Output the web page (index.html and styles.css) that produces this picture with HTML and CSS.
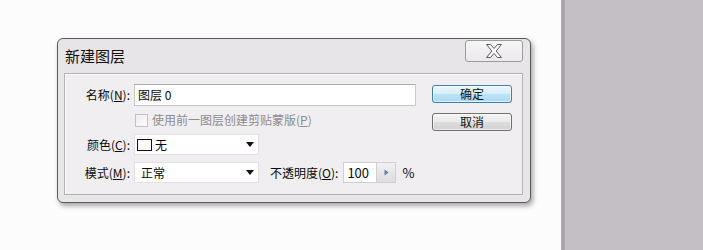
FILE: index.html
```html
<!DOCTYPE html>
<html lang="zh-CN">
<head>
    <meta charset="UTF-8">
    <meta name="viewport" content="width=device-width, initial-scale=1.0">
    <title>新建图层</title>
    <link rel="stylesheet" href="styles.css">
</head>
<body>

    <div class="workspace">
        <div class="dialog">
            <div class="title-bar">
                <span class="title">新建图层</span>
                <button class="close-btn" title="关闭">
                    <svg width="16" height="14" viewBox="0 0 16 14">
                        <path d="M0.5 0.5 H4.6 L8 4.5 L11.4 0.5 H15.5 L10.2 7 L15.5 13.5 H11.4 L8 9.5 L4.6 13.5 H0.5 L5.8 7 Z" fill="#fbfbfb" stroke="#5e5e5e" stroke-width="1"/>
                    </svg>
                </button>
            </div>

            <div class="panel">
                <div class="form">
                    <div class="row">
                        <span class="label">名称(<u>N</u>):</span>
                        <div class="text-box name-box">图层 0</div>
                    </div>

                    <div class="row check-row">
                        <span class="checkbox"></span>
                        <span class="disabled">使用前一图层创建剪贴蒙版(<u>P</u>)</span>
                    </div>

                    <div class="row">
                        <span class="label">颜色(<u>C</u>):</span>
                        <div class="select color-select">
                            <span class="swatch"></span>无
                            <span class="arrow"></span>
                        </div>
                    </div>

                    <div class="row">
                        <span class="label">模式(<u>M</u>):</span>
                        <div class="select mode-select">
                            正常
                            <span class="arrow"></span>
                        </div>
                        <span class="opacity-label">不透明度(<u>O</u>):</span>
                        <div class="spin">
                            <span class="spin-value">100</span>
                            <span class="spin-btn">
                                <svg width="5" height="7" viewBox="0 0 5 7"><path d="M0.5 0.5 L4.5 3.5 L0.5 6.5 Z" fill="#5f7fa6"/></svg>
                            </span>
                        </div>
                        <span class="percent">%</span>
                    </div>
                </div>

                <div class="buttons">
                    <button class="btn btn-default">确定</button>
                    <button class="btn">取消</button>
                </div>
            </div>
        </div>
    </div>

    <div class="side"></div>

</body>
</html>
```

FILE: styles.css
```css
* {
    margin: 0;
    padding: 0;
    box-sizing: border-box;
}

body {
    display: flex;
    height: 250px;
    overflow: hidden;
    background: #fcfcfc;
    font-family: "Noto Sans CJK SC", "Noto Sans", sans-serif;
    font-size: 12px;
    line-height: 16px;
    color: #0a0a0a;
}

u {
    text-decoration: underline;
    text-underline-offset: 1px;
}

.workspace {
    width: 561px;
    padding: 38px 0 0 57px;
}

.side {
    flex: 1;
    background: #c4bfc4;
    border-left: 4px solid #aba6ab;
}

/* dialog frame */
.dialog {
    width: 474px;
    height: 165px;
    display: flex;
    flex-direction: column;
    padding: 0 7px 7px 6px;
    background: #e8e5e8;
    border: 1px solid #5a5a5a;
    border-radius: 6px;
    box-shadow: 2px 3px 5px rgba(0, 0, 0, 0.35);
}

.title-bar {
    height: 34px;
    display: flex;
    justify-content: space-between;
    align-items: flex-start;
}

.title {
    align-self: center;
    padding-left: 1px;
    font-size: 15px;
    line-height: 18px;
    color: #111;
}

.close-btn {
    width: 58px;
    height: 22px;
    margin-top: 1px;
    display: flex;
    align-items: center;
    justify-content: center;
    border: 1px solid #9b9b9b;
    border-radius: 3px;
    background: linear-gradient(#f7f7f7, #ebe9eb);
}

/* content panel */
.panel {
    flex: 1;
    display: flex;
    justify-content: space-between;
    background: #f0eef0;
    border: 1px solid #b4b1b4;
    box-shadow: inset 1px 1px 0 #fafafa;
}

.form {
    display: flex;
    flex-direction: column;
    gap: 7px;
    padding-top: 10px;
}

.row {
    display: flex;
    align-items: center;
    height: 21px;
}

.row:first-child {
    height: 22px;
}

.label {
    width: 65px;
    margin-right: 4px;
    text-align: right;
}

.text-box {
    height: 22px;
    padding: 2px 3px;
    background: #fff;
    border: 1px solid #c6c8cc;
    border-top-color: #abadb3;
}

.name-box {
    width: 282px;
}

.check-row {
    height: 14px;
    padding-left: 70px;
}

.checkbox {
    width: 13px;
    height: 13px;
    margin-right: 4px;
    border: 1px solid #c2c2c2;
    background: linear-gradient(135deg, #eeeeee, #fbfbfb);
}

.disabled {
    color: #8e8c8e;
}

.select {
    width: 125px;
    height: 21px;
    display: flex;
    align-items: center;
    background: #fff;
    border: 1px solid #e2e0e2;
}

.color-select {
    padding-left: 2px;
}

.mode-select {
    padding-left: 6px;
}

.swatch {
    width: 15px;
    height: 12px;
    margin-right: 3px;
    border: 1px solid #111;
    background: #fff;
}

.arrow {
    margin-left: auto;
    margin-right: 4px;
    width: 0;
    height: 0;
    border-left: 4px solid transparent;
    border-right: 4px solid transparent;
    border-top: 5px solid #111;
}

.opacity-label {
    margin-left: 11px;
    margin-right: 5px;
}

.spin {
    width: 53px;
    height: 21px;
    display: flex;
    background: #fff;
    border: 1px solid #d0ced0;
}

.spin-value {
    flex: 1;
    padding: 2px 0 0 3px;
    font-size: 13px;
}

.spin-btn {
    width: 19px;
    display: flex;
    align-items: center;
    justify-content: center;
    border-left: 1px solid #cfcdcf;
    background: linear-gradient(#f2f1f2, #dedcde);
}

.percent {
    margin-left: 6px;
    font-size: 13px;
}

/* buttons */
.buttons {
    display: flex;
    flex-direction: column;
    gap: 10px;
    padding: 11px 10px 0 0;
}

.btn {
    width: 80px;
    height: 18px;
    font-family: inherit;
    font-size: 12px;
    line-height: 14px;
    color: #111;
    border: 1px solid #707070;
    border-radius: 3px;
    background: linear-gradient(#f4f4f4, #ebebeb 50%, #dddddd 50%, #d2d2d2);
    box-shadow: inset 0 0 0 1px rgba(255, 255, 255, 0.6);
    cursor: pointer;
}

.btn-default {
    border-color: #3c7fb1;
    background: linear-gradient(#e9f5fc, #d6effc 50%, #bde4f8 50%, #a9d9f3);
}
```
